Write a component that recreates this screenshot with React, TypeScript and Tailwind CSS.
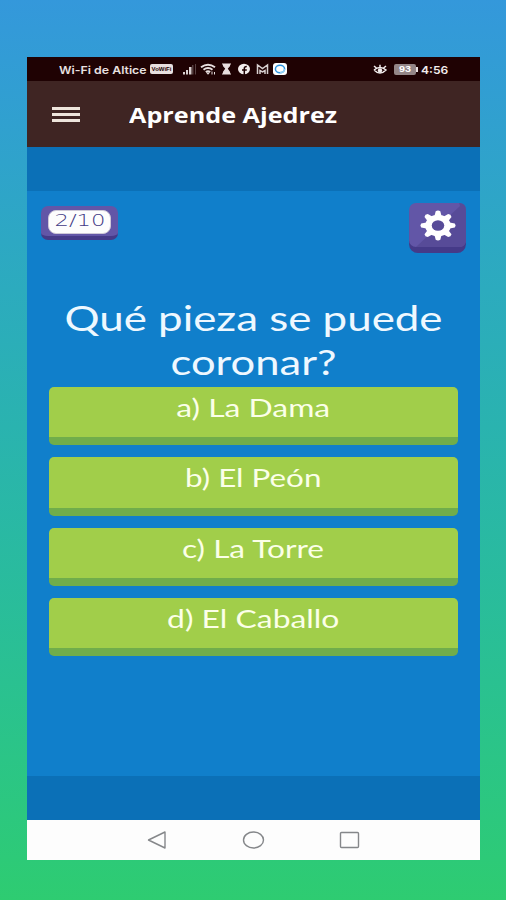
import clsx from 'clsx'

type Answer = {
  label: string
  stretch: string
}

const answers: Answer[] = [
  { label: 'a) La Dama', stretch: 'scale-x-[1.3]' },
  { label: 'b) El Peón', stretch: 'scale-x-[1.28]' },
  { label: 'c) La Torre', stretch: 'scale-x-[1.29]' },
  { label: 'd) El Caballo', stretch: 'scale-x-[1.3]' },
]

const StatusBar: React.FC = () => {
  return (
    <div className="flex h-6 items-center bg-[#1f0203] pl-8 pr-8 text-[#e8e0e0]">
      <div className="w-[91px] whitespace-nowrap pt-px font-['Inter','Liberation_Sans',sans-serif] text-[11px] font-semibold leading-6">
        <span className="inline-block origin-left scale-x-[1.120]">
          Wi-Fi de Altice
        </span>
      </div>
      <div className="flex h-[10px] w-[23px] items-center justify-center rounded-[2px] bg-[#e8dfdf] font-['Liberation_Sans',sans-serif] text-[6px] font-bold leading-none text-[#1f0203]">
        VoWiFi
      </div>
      <svg viewBox="0 0 105 14" className="ml-[9px] h-[14px] w-[105px] flex-none">
        {/* signal */}
        <g fill="#d8cfcf">
          <rect x="1" y="10" width="2" height="2.500" />
          <rect x="4" y="8" width="2" height="4.500" />
          <rect x="7" y="5" width="2.500" height="7.500" />
          <rect x="10" y="3" width="1.5" height="9.500" opacity=".3" />
          <rect x="13" y="2" width="1" height="10.500" opacity=".3" />
        </g>
        {/* wifi */}
        <g fill="none" stroke="#e8dfdf" strokeWidth="2">
          <path d="M19 5.2q7-5 14 0" />
          <path d="M21.5 7.7q4.500-3.200 9 0" />
          <path d="M23.800 10q2.200-1.500 4.400 0" />
        </g>
        <path d="M24 10.500h4L26 12.800z" fill="#e8dfdf" />
        <path d="M30 9.500v3M32.500 10v2.500" stroke="#e8dfdf" strokeWidth="1" />
        {/* hourglass */}
        <path
          d="M40 2h9M40 12h9M41.500 2v1.800L44 6.700l-2.500 3.500V12h6v-1.800L45 6.700l2.500-2.900V2z"
          fill="#e8dfdf"
          stroke="#e8dfdf"
          strokeWidth="1.200"
        />
        {/* facebook */}
        <ellipse cx="62" cy="7" rx="6" ry="5.300" fill="#f3eded" />
        <path d="M62.300 13V6.500q0-2 2.500-2M60 8h4.800" fill="none" stroke="#1f0203" strokeWidth="1.500" />
        {/* mail */}
        <path
          d="M75.500 12V3l5 3.500L85.500 3v9M78 12V8.500l2.500 1.500L83 8.500V12"
          fill="none"
          stroke="#d8cfcf"
          strokeWidth="1.500"
        />
        <rect x="91" y="1" width="14" height="12" rx="3" fill="#fff" />
        <ellipse cx="98" cy="7" rx="4.600" ry="3.700" fill="none" stroke="#2e95e0" strokeWidth="1.500" />
        <path d="M98 10.500q4.500 0 4.500-3.500" fill="none" stroke="#8fd0f5" strokeWidth="1.500" />
      </svg>
      <svg viewBox="0 0 14 12" className="ml-auto mr-[7px] mt-px h-3 w-[14px] flex-none">
        <path
          d="M1 6q6-5 12 0-6 6-12 0M1 2l3 2.500M7 .8v3M13 2l-3 2.500"
          fill="none"
          stroke="#f3eded"
          strokeWidth="1.500"
        />
        <circle cx="7" cy="6.500" r="2.200" fill="#f3eded" />
      </svg>
      <div className="flex h-[11px] w-[22px] items-center justify-center rounded-[2px] bg-[#948687] font-['Liberation_Sans',sans-serif] text-[9px] font-bold leading-none text-white">
        <span className="inline-block scale-x-[1.2]">93</span>
      </div>
      <div className="mr-[3px] h-[5px] w-[2px] bg-[#e8dfdf]" />
      <div className="w-[27px] pt-px font-['Inter','Liberation_Sans',sans-serif] text-[11px] font-semibold leading-6 text-[#f3eded]">
        <span className="inline-block origin-left scale-x-[1.1]">4:56</span>
      </div>
    </div>
  )
}

const Header: React.FC = () => {
  return (
    <header className="flex h-[66px] items-center bg-[#3f2523] pl-[25px]">
      <button type="button" className="flex w-7 flex-col gap-[3px]">
        <span className="h-[3px] bg-[#eee5dc]" />
        <span className="h-[3px] bg-[#eee5dc]" />
        <span className="h-[3px] bg-[#eee5dc]" />
      </button>
      <h1 className="ml-[49px] whitespace-nowrap font-['Open_Sans','Liberation_Sans',sans-serif] text-[22px] font-bold leading-8 text-white">
        <span className="inline-block origin-left scale-x-[1.145]">
          Aprende Ajedrez
        </span>
      </h1>
    </header>
  )
}

const Settings: React.FC = () => {
  return (
    <svg viewBox="0 0 58 51" className="h-[50px] w-[57px]">
      <rect x="0" y="2" width="58" height="49" rx="9" fill="#453a88" />
      <rect x="0" y="0" width="58" height="45" rx="7" fill="#6256a7" />
      <path d="M51 0q7 0 7 7v31q0 7-7 7H7L52 3z" fill="#574b98" />
      <g transform="translate(29.500 23) scale(1.180 1)">
        <g fill="#fff">
          <circle r="11" />
          {[0, 45, 90, 135, 180, 225, 270, 315].map((angle) => (
            <path
              key={angle}
              d="M-3-10L-2-14.500Q0-16 2-14.500L3-10z"
              transform={`rotate(${angle})`}
            />
          ))}
        </g>
        <circle r="5.400" fill="#574b98" />
      </g>
    </svg>
  )
}

const Quiz: React.FC = () => {
  return (
    <main className="h-[585px] bg-[#107fcb] pt-3">
      <div className="flex h-[52px] items-start justify-between pl-[14px] pr-[14px]">
        <div className="mt-[3px] flex h-[34px] w-[77px] justify-center rounded-[7px] border-b-4 border-[#453a88] bg-[#6256a7] pt-1">
          <div className="flex h-6 w-[63px] items-center justify-center rounded-[8px] border border-[#cfc9d8] bg-[#fdfdfd] font-['DejaVu_Sans',sans-serif] text-[16px] font-extralight leading-none text-[#423a86]">
            <span className="inline-block -translate-y-px scale-x-[1.420]">
              2/10
            </span>
          </div>
        </div>
        <Settings />
      </div>
      <h2 className="mt-[41px] h-[91px] text-center font-['Lato','Liberation_Sans',sans-serif] text-[34px] leading-[44px] text-[#eef8ff]">
        <span className="block scale-x-[1.29] whitespace-nowrap">
          Qué pieza se puede
        </span>
        <span className="block scale-x-[1.28] whitespace-nowrap">coronar?</span>
      </h2>
      <div className="flex flex-col gap-3 pl-[22px] pr-[22px]">
        {answers.map(({ label, stretch }) => (
          <button
            key={label}
            type="button"
            className="flex h-[58.300px] flex-none items-start justify-center rounded-[5px] border-b-8 border-[#70ad4b] bg-[#a1ce4a] font-['Lato','Liberation_Sans',sans-serif] text-[24.500px] leading-[42px] text-[#fbffe8]"
          >
            <span className={clsx('inline-block whitespace-nowrap', stretch)}>
              {label}
            </span>
          </button>
        ))}
      </div>
    </main>
  )
}

const NavigationBar: React.FC = () => {
  return (
    <nav className="flex h-10 items-center justify-center bg-[#fdfdfd]">
      <svg
        viewBox="0 0 214 20"
        className="h-5 w-[214px]"
        fill="none"
        stroke="#85878a"
        strokeWidth="1.400"
        strokeLinejoin="round"
      >
        <path d="M1.500 10L18 2v16z" />
        <ellipse cx="106.500" cy="10" rx="10" ry="8" />
        <rect x="193.500" y="2.500" width="18" height="15" rx="1" />
      </svg>
    </nav>
  )
}

const App: React.FC = () => {
  return (
    <div className="h-[900px] w-[506px] overflow-hidden bg-gradient-to-b from-[#3498db] to-[#2ecc71] pl-[27px] pt-[57px]">
      <div className="w-[453px]">
        <StatusBar />
        <Header />
        <div className="h-11 bg-[#0b70b7]" />
        <Quiz />
        <div className="h-11 bg-[#0b70b7]" />
        <NavigationBar />
      </div>
    </div>
  )
}

export default App
